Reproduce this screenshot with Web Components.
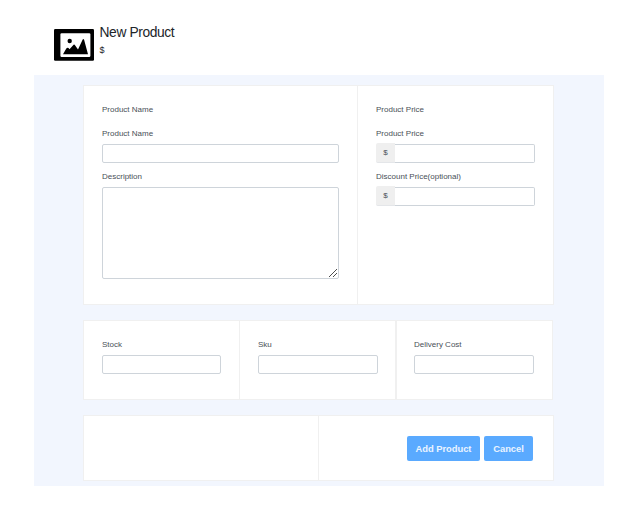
<!DOCTYPE html>
<html lang="en">
<head>
<meta charset="utf-8">
<title>New Product</title>
<style>
html,body{margin:0;background:#fff;font-family:"Liberation Sans",Arial,sans-serif}
body{width:643px;height:508px;overflow:hidden}
</style>
</head>
<body>
<product-page></product-page>
<script>
function define(name, html) {
  const t = document.createElement('template');
  t.innerHTML = html;
  customElements.define(name, class extends HTMLElement {
    constructor() {
      super();
      this.attachShadow({ mode: 'open' }).append(t.content.cloneNode(true));
    }
  });
}

define('product-header', `
<style>
:host{display:flex;height:75px;box-sizing:border-box;padding:25px 0 0 54px;color:#212529}
svg{display:block;margin-top:4px;width:40px;height:32px}
div{margin-left:5.5px}
h1{margin:0;font-size:13.8px;letter-spacing:-.38px;line-height:16px;font-weight:400}
p{margin:3px 0 0;font-size:9px;line-height:12px}
</style>
<svg viewBox="0 0 40 32">
  <rect width="40" height="31.7" rx="1.2" fill="#000"/>
  <rect x="6.4" y="4.2" width="30" height="23.8" rx="1.2" fill="#fff"/>
  <circle cx="15.7" cy="12" r="2.2" fill="#000"/>
  <path d="M9 25.2L12.3 19.5Q13.8 17.8 15.5 20.3L19.6 15.7Q20.4 15.2 21.2 16.5L24 20.4L28.7 10.4Q29.4 9.3 30.1 10.8L34 25.2Z" fill="#000"/>
</svg>
<div><h1><slot name="title"></slot></h1><p><slot name="price"></slot></p></div>`);

define('form-card', `
<style>
:host{display:flex;box-sizing:border-box;background:#fff;border:1px solid #f0f0f0}
</style><slot></slot>`);

define('form-pane', `
<style>
:host{display:block;box-sizing:border-box;padding:17px 18px 0}
:host([divided]){border-left:1px solid #f0f0f0}
:host([wide-divider]){border-left-width:2px}
</style><slot></slot>`);

define('form-label', `
<style>
:host{display:block;font-size:8px;line-height:14px;height:14px;color:#495057;white-space:nowrap}
</style><slot></slot>`);

define('text-field', `
<style>
:host{display:flex;height:19px}
span{flex:none;box-sizing:border-box;width:19px;height:20px;margin-top:-1px;background:#efefef;color:#495057;font-size:8px;line-height:19px;text-align:center;border-bottom:1px solid #e4e6e9;border-radius:2px 0 0 2px;display:none}
:host([prefixed]) span{display:block}
input{flex:1;min-width:0;width:0;box-sizing:border-box;height:19px;margin:0;padding:0 4px;border:1px solid #ced4da;border-radius:2px;background:#fff;outline:0}
:host([prefixed]) input{border-left:0;border-radius:0 2px 2px 0}
</style><span><slot></slot></span><input type="text">`);

define('text-region', `
<style>
:host{display:block}
textarea{display:block;box-sizing:border-box;width:100%;height:92px;margin:0;border:1px solid #ced4da;border-radius:2px;resize:none;background:#fff}
.box{display:grid}
.box>*{grid-area:1/1}
svg{align-self:end;justify-self:end;margin:0 1px 1px 0;pointer-events:none;z-index:1}
</style>
<div class="box"><textarea></textarea>
<svg width="9" height="9" viewBox="0 0 9 9" fill="#4d4d4d" shape-rendering="crispEdges"><path d="M0 7h1v1H0zM1 6h1v1H1zM2 5h1v1H2zM3 4h1v1H3zM4 3h1v1H4zM5 2h1v1H5zM6 1h1v1H6zM7 0h1v1H7zM4 7h1v1H4zM5 6h1v1H5zM6 5h1v1H6zM7 4h1v1H7z"/></svg></div>`);

define('action-button', `
<style>
:host{display:block}
button{display:block;width:100%;height:25px;margin:0;padding:0;border:0;border-radius:2px;background:#5aaaff;color:#eaf4ff;font:700 9.4px/25px "Liberation Sans",Arial,sans-serif;letter-spacing:-.03px;white-space:nowrap}
</style><button type="button"><slot></slot></button>`);

define('product-page', `
<style>
:host{display:block}
main{box-sizing:border-box;width:570px;height:411px;margin-left:34px;padding:10px 50px 0 49px;background:#f2f6fe;display:flex;flex-direction:column;gap:15px}
.details{height:220px}
.stock{height:80px;width:470px}
.actions{height:66px}
.details form-pane:first-child{width:273px}
.details form-pane:last-child{width:196px}
.gap{margin-top:10px}
.f{margin-top:3px}
.n{margin-top:7px}
.stock form-pane:nth-child(1){width:155px}
.stock form-pane:nth-child(2){width:156px;padding-right:17px}
.stock form-pane:nth-child(3){width:157px;padding-left:17px}
.actions form-pane:first-child{width:234px}
.actions form-pane:last-child{width:235px;padding:20px 20px 0 0}
.buttons{display:flex;justify-content:flex-end;gap:4px}
.add{width:73px}.cancel{width:49px}
</style>
<product-header><span slot="title">New Product</span><span slot="price">$</span></product-header>
<main>
  <form-card class="details">
    <form-pane>
      <form-label>Product Name</form-label>
      <form-label class="gap">Product Name</form-label>
      <text-field class="f"></text-field>
      <form-label class="n">Description</form-label>
      <text-region class="f"></text-region>
    </form-pane>
    <form-pane divided>
      <form-label>Product Price</form-label>
      <form-label class="gap">Product Price</form-label>
      <text-field class="f" prefixed>$</text-field>
      <form-label class="n">Discount Price(optional)</form-label>
      <text-field class="f" prefixed>$</text-field>
    </form-pane>
  </form-card>
  <form-card class="stock">
    <form-pane><form-label>Stock</form-label><text-field class="f"></text-field></form-pane>
    <form-pane divided><form-label>Sku</form-label><text-field class="f"></text-field></form-pane>
    <form-pane divided wide-divider><form-label>Delivery Cost</form-label><text-field class="f"></text-field></form-pane>
  </form-card>
  <form-card class="actions">
    <form-pane></form-pane>
    <form-pane divided><div class="buttons"><action-button class="add">Add Product</action-button><action-button class="cancel">Cancel</action-button></div></form-pane>
  </form-card>
</main>`);
</script>
</body>
</html>
